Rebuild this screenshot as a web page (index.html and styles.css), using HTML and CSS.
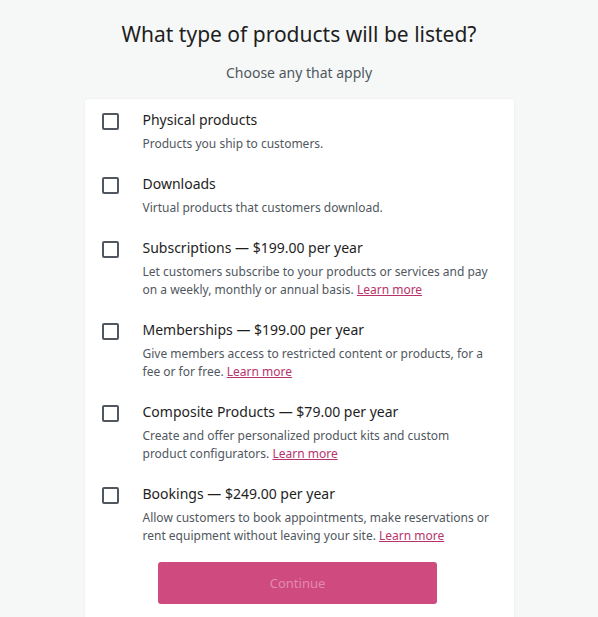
FILE: index.html
```html
<!DOCTYPE html>
<html>
<head>
<meta charset="utf-8">
<link rel="stylesheet" href="styles.css">
</head>
<body>
<div class="page">
  <h1 class="title">What type of products will be listed?</h1>
  <p class="subtitle">Choose any that apply</p>
  <div class="card">
    <div class="options">
      <div class="option">
        <span class="box"></span>
        <div class="text">
          <div class="label">Physical products</div>
          <div class="desc">Products you ship to customers.</div>
        </div>
      </div>
      <div class="option">
        <span class="box"></span>
        <div class="text">
          <div class="label">Downloads</div>
          <div class="desc">Virtual products that customers download.</div>
        </div>
      </div>
      <div class="option">
        <span class="box"></span>
        <div class="text">
          <div class="label">Subscriptions — $199.00 per year</div>
          <div class="desc">Let customers subscribe to your products or services and pay on a weekly, monthly or annual basis. <a class="link" href="#">Learn more</a></div>
        </div>
      </div>
      <div class="option">
        <span class="box"></span>
        <div class="text">
          <div class="label">Memberships — $199.00 per year</div>
          <div class="desc">Give members access to restricted content or products, for a fee or for free. <a class="link" href="#">Learn more</a></div>
        </div>
      </div>
      <div class="option">
        <span class="box"></span>
        <div class="text">
          <div class="label">Composite Products — $79.00 per year</div>
          <div class="desc">Create and offer personalized product kits and custom product configurators. <a class="link" href="#">Learn more</a></div>
        </div>
      </div>
      <div class="option">
        <span class="box"></span>
        <div class="text">
          <div class="label">Bookings — $249.00 per year</div>
          <div class="desc">Allow customers to book appointments, make reservations or rent equipment without leaving your site. <a class="link" href="#">Learn more</a></div>
        </div>
      </div>
    </div>
    <div class="actions">
      <button class="continue" disabled>Continue</button>
    </div>
  </div>
</div>
</body>
</html>
```
FILE: styles.css
```css
html, body {
  margin: 0;
  padding: 0;
  background: #f6f7f7;
  font-family: "Noto Sans", "Open Sans", sans-serif;
  color: #1e1e1e;
  overflow: hidden;
}
.page {
  display: flex;
  flex-direction: column;
  align-items: center;
  padding-top: 19px;
}
.title {
  margin: 0;
  font-size: 21px;
  font-weight: 400;
  line-height: 30px;
  color: #1e1e1e;
}
.subtitle {
  margin: 14px 0 0;
  font-size: 14px;
  line-height: 20px;
  color: #50575e;
}
.card {
  margin-top: 16px;
  width: 429px;
  box-sizing: border-box;
  background: #fff;
  border-radius: 3px;
  box-shadow: 0 0 2px rgba(0,0,0,0.08);
  padding: 11px 20px 40px 17px;
}
.options {
  display: flex;
  flex-direction: column;
  gap: 21px;
}
.option {
  display: flex;
  align-items: flex-start;
  gap: 24px;
}
.box {
  flex: none;
  width: 17px;
  height: 17px;
  box-sizing: border-box;
  border: 2px solid #50575e;
  border-radius: 2px;
  margin-top: 3px;
}
.text {
  flex: 1;
}
.label {
  font-size: 14px;
  line-height: 20px;
  color: #1e1e1e;
}
.desc {
  margin-top: 5px;
  font-size: 12px;
  line-height: 18px;
  color: #50575e;
}
.link {
  color: #b6346b;
  text-decoration: underline;
}
.actions {
  display: flex;
  justify-content: center;
  margin-top: 17px;
}
.continue {
  width: 279px;
  height: 42px;
  border: none;
  border-radius: 3px;
  background: #cf4a7e;
  color: #e08cae;
  font-family: inherit;
  font-size: 13px;
}
```
